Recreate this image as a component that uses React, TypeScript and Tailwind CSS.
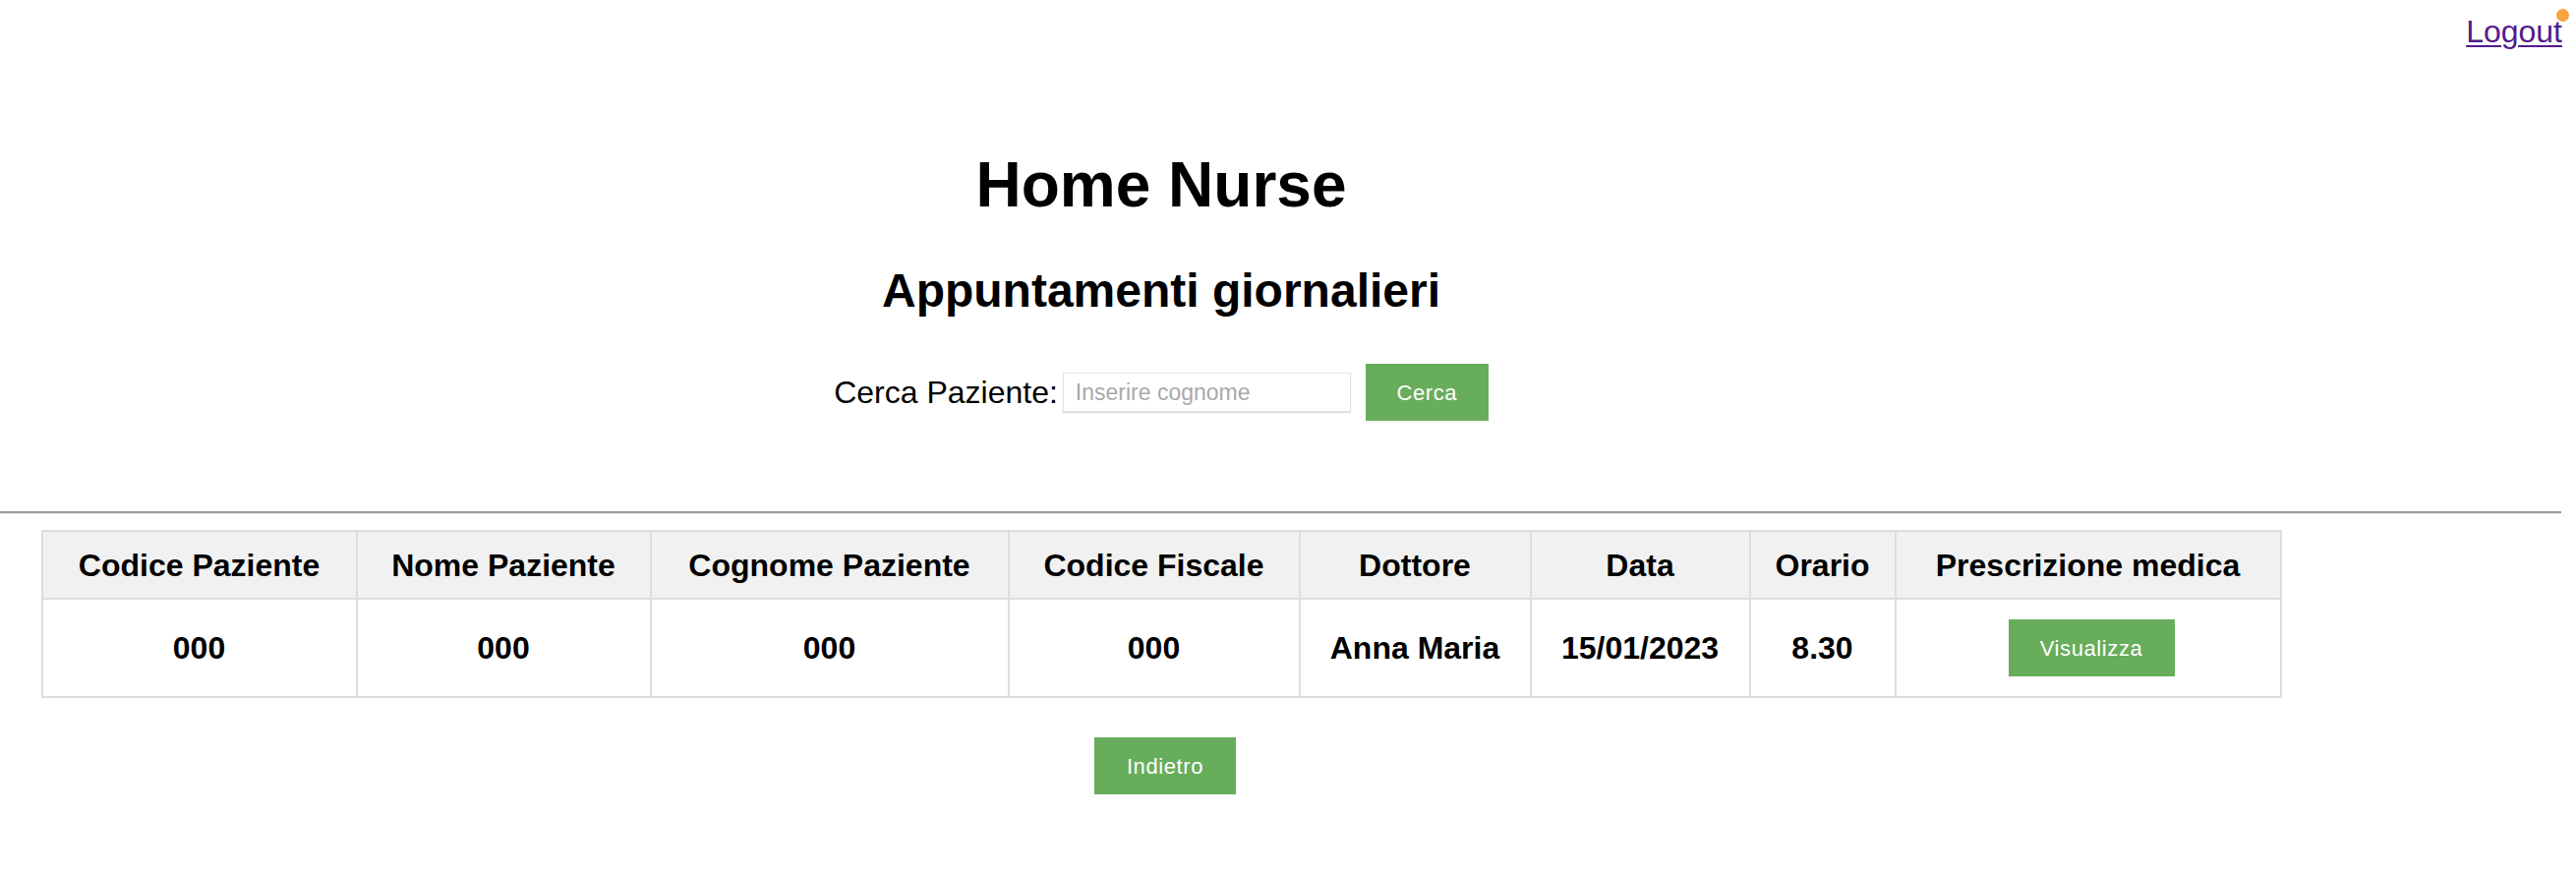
import React from "react";

const columns = [
  { label: "Codice Paziente", w: "w-[320px]" },
  { label: "Nome Paziente", w: "w-[299px]" },
  { label: "Cognome Paziente", w: "w-[364px]" },
  { label: "Codice Fiscale", w: "w-[296px]" },
  { label: "Dottore", w: "w-[235px]" },
  { label: "Data", w: "w-[223px]" },
  { label: "Orario", w: "w-[148px]" },
  { label: "Prescrizione medica", w: "w-[392px]" },
];

const row = ["000", "000", "000", "000", "Anna Maria", "15/01/2023", "8.30"];

const App = () => {
  return (
    <div className="w-[2620px] min-h-[890px] bg-white text-black font-['Liberation_Sans',Arial,sans-serif]">
      {/* Top bar */}
      <div className="flex justify-end pr-[14px] pt-[16px]">
        <a
          href="#"
          className="relative text-[32px] leading-none text-[#551a8b] underline decoration-2 underline-offset-[3px]"
        >
          Logout
          <span className="absolute -top-[7px] -right-[7px] w-[13px] h-[13px] rounded-full bg-[#f5a43e]" />
        </a>
      </div>

      {/* Header + search */}
      <div className="w-[2362px] flex flex-col items-center">
        <h1 className="mt-[108px] text-[64px] leading-none font-bold">Home Nurse</h1>
        <h2 className="mt-[52px] text-[48px] leading-none font-bold">Appuntamenti giornalieri</h2>
        <div className="mt-[50px] h-[58px] flex items-center">
          <label className="text-[32px] leading-none">Cerca Paziente:</label>
          <input
            type="text"
            placeholder="Inserire cognome"
            className="ml-[5px] w-[293px] h-[40px] pl-[12px] text-[23px] border border-[#e3e3e3] shadow-[0_1px_1px_rgba(0,0,0,0.15)] outline-none placeholder:text-[#a9a9a9]"
          />
          <button className="ml-[15px] w-[125px] h-[58px] bg-[#68ad5c] text-white text-[22px] tracking-[0.6px]">
            Cerca
          </button>
        </div>
      </div>

      {/* Divider */}
      <div className="mt-[92px] w-[2605px] border-t-2 border-t-[#9a9a9a] border-b border-b-[#eeeeee]" />

      {/* Table */}
      <div className="w-[2362px] flex flex-col items-center">
        <table className="mt-[16px] table-fixed border-collapse w-[2277px] text-[32px] font-bold">
          <thead>
            <tr className="h-[69px] bg-[#f1f1f1]">
              {columns.map((c) => (
                <th key={c.label} className={`${c.w} border-2 border-[#dddddd] text-center align-middle font-bold`}>
                  {c.label}
                </th>
              ))}
            </tr>
          </thead>
          <tbody>
            <tr className="h-[100px]">
              {row.map((v, i) => (
                <td key={i} className="border-2 border-[#dddddd] text-center align-middle">
                  {v}
                </td>
              ))}
              <td className="border-2 border-[#dddddd] text-center align-middle">
                <button className="w-[169px] h-[58px] ml-[7px] bg-[#68ad5c] text-white text-[22px] font-normal tracking-[0.6px]">
                  Visualizza
                </button>
              </td>
            </tr>
          </tbody>
        </table>

        <div className="mt-[40px] pl-[8px] flex justify-center">
          <button className="w-[144px] h-[58px] bg-[#68ad5c] text-white text-[22px] tracking-[0.6px]">
            Indietro
          </button>
        </div>
      </div>
    </div>
  );
};

export default App;
